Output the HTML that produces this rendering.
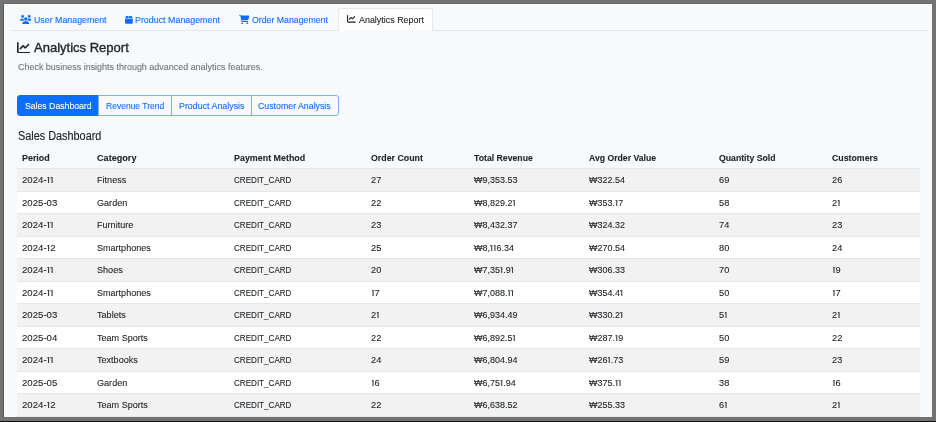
<!DOCTYPE html>
<html><head><meta charset="utf-8">
<style>
html,body{margin:0;padding:0;}
body{width:936px;height:422px;background:#727272;position:relative;overflow:hidden;font-family:"Liberation Sans",sans-serif;color:#212529;}
.blk{position:absolute;left:0;top:421px;width:936px;height:1px;background:#111;}
.frame{position:absolute;left:4px;top:4px;width:928px;height:413px;background:#f8f9fa;overflow:hidden;will-change:transform;}
.inner{position:absolute;left:-4px;top:-4px;width:936px;height:422px;}
.t{position:absolute;white-space:nowrap;line-height:1;-webkit-text-stroke:0.1px currentColor;}
.ic{position:absolute;}
.one{margin-left:0.7px;letter-spacing:0.14px;position:relative;}
.one::before{content:'';position:absolute;left:-0.2px;top:3.0px;width:1.2px;height:0.9px;background:currentColor;transform:skewY(-35deg);}
.box{position:absolute;box-sizing:border-box;}
</style></head><body>
<div class="box" style="left:3px;top:3px;width:1px;height:414px;background:#555"></div>
<div class="box" style="left:3px;top:3px;width:929px;height:1px;background:#686868"></div>
<div class="frame"><div class="inner">

<div class="box" style="left:11px;top:30px;width:916px;height:1px;background:#e3e6e9"></div>
<div class="box" style="left:338px;top:8.4px;width:95px;height:22.6px;background:#fff;border:1px solid #e6e9ec;border-bottom:none;border-radius:3px 3px 0 0"></div>
<div class="t" style="left:33.50px;top:14.96px;font-size:9.5px;transform:scaleX(0.9282);transform-origin:0 0;color:#0d6efd;">User Management</div>
<div class="t" style="left:135.30px;top:14.96px;font-size:9.5px;transform:scaleX(0.9341);transform-origin:0 0;color:#0d6efd;">Product Management</div>
<div class="t" style="left:251.70px;top:14.96px;font-size:9.5px;transform:scaleX(0.9217);transform-origin:0 0;color:#0d6efd;">Order Management</div>
<div class="t" style="left:358.50px;top:14.96px;font-size:9.5px;transform:scaleX(0.9391);transform-origin:0 0;color:#212529;">Analytics Report</div>
<svg class="ic" style="left:19.7px;top:14.8px" width="11.5" height="9.2" viewBox="0 0 640 512"><path fill="#0d6efd" d="M144 0a80 80 0 1 1 0 160A80 80 0 1 1 144 0zM512 0a80 80 0 1 1 0 160A80 80 0 1 1 512 0zM0 298.7C0 239.8 47.8 192 106.7 192h42.7c15.9 0 31 3.5 44.6 9.7c-1.3 7.2-1.9 14.7-1.9 22.3c0 38.2 16.8 72.5 43.3 96c-.2 0-.4 0-.7 0H21.3C9.6 320 0 310.4 0 298.7zM405.3 320c-.2 0-.4 0-.7 0c26.6-23.5 43.3-57.8 43.3-96c0-7.6-.7-15-1.9-22.3c13.6-6.3 28.7-9.7 44.6-9.7h42.7C592.2 192 640 239.8 640 298.7c0 11.8-9.6 21.3-21.3 21.3H405.3zM224 224a96 96 0 1 1 192 0 96 96 0 1 1 -192 0zM128 485.3C128 411.7 187.7 352 261.3 352H378.7C452.3 352 512 411.7 512 485.3c0 14.7-11.9 26.7-26.7 26.7H154.7c-14.7 0-26.7-11.9-26.7-26.7z"/></svg>
<svg class="ic" style="left:124.8px;top:15.8px" width="7.8" height="7.8" viewBox="0 32 448 448"><path fill="#0d6efd" d="M50.7 58.5L0 160H208V32H93.7C75.5 32 58.9 42.3 50.7 58.5zM240 160H448L397.3 58.5C389.1 42.3 372.5 32 354.3 32H240V160zm208 32H0V416c0 35.3 28.7 64 64 64H384c35.3 0 64-28.7 64-64V192z"/></svg>
<svg class="ic" style="left:238.8px;top:14.8px" width="10.35" height="9.2" viewBox="0 0 576 512"><path fill="#0d6efd" d="M0 24C0 10.7 10.7 0 24 0H69.5c22 0 41.5 12.8 50.6 32h411c26.3 0 45.5 25 38.6 50.4l-41 152.3c-8.5 31.4-37 53.3-69.5 53.3H170.7l5.4 28.5c2.2 11.3 12.1 19.5 23.6 19.5H488c13.300 0 24 10.700 24 24s-10.700 24-24 24H199.700c-34.600 0-64.300-24.600-70.700-58.500L77.400 54.500c-.7-3.800-4-6.500-7.900-6.500H24C10.700 48 0 37.300 0 24zM128 464a48 48 0 1 1 96 0 48 48 0 1 1 -96 0zm336-48a48 48 0 1 1 0 96 48 48 0 1 1 0-96z"/></svg>
<svg class="ic" style="left:347px;top:15.4px" width="8.8" height="7.7" viewBox="0 32 512 448"><path fill="#212529" d="M64 64c0-17.7-14.3-32-32-32S0 46.3 0 64V400c0 44.2 35.8 80 80 80H480c17.7 0 32-14.3 32-32s-14.3-32-32-32H80c-8.8 0-16-7.2-16-16V64zm406.6 86.6c12.5-12.5 12.5-32.8 0-45.3s-32.8-12.5-45.3 0L320 210.7l-57.4-57.4c-12.5-12.5-32.8-12.5-45.3 0l-112 112c-12.5 12.5-12.5 32.8 0 45.3s32.8 12.5 45.3 0L240 221.3l57.4 57.4c12.5 12.5 32.8 12.5 45.3 0l128-128z"/></svg>
<svg class="ic" style="left:17px;top:41.6px" width="13.2" height="11.6" viewBox="0 32 512 448"><path fill="#212529" d="M64 64c0-17.7-14.3-32-32-32S0 46.3 0 64V400c0 44.2 35.8 80 80 80H480c17.7 0 32-14.3 32-32s-14.3-32-32-32H80c-8.8 0-16-7.2-16-16V64zm406.6 86.6c12.5-12.5 12.5-32.8 0-45.3s-32.8-12.5-45.3 0L320 210.7l-57.4-57.4c-12.5-12.5-32.8-12.5-45.3 0l-112 112c-12.5 12.5-12.5 32.8 0 45.3s32.8 12.5 45.3 0L240 221.3l57.4 57.4c12.5 12.5 32.8 12.5 45.3 0l128-128z"/></svg>
<div class="t" style="left:33.60px;top:40.60px;font-size:13px;transform:scaleX(1.0016);transform-origin:0 0;-webkit-text-stroke:0.35px #212529;">Analytics Report</div>
<div class="t" style="left:17.50px;top:62.16px;font-size:9.5px;transform:scaleX(0.9421);transform-origin:0 0;color:#6c757d;">Check business insights through advanced analytics features.</div>
<div class="box" style="left:17px;top:94.7px;width:82.4px;height:20.9px;border:1px solid #0d6efd;background:#0d6efd;border-radius:3px 0 0 3px;"></div>
<div class="box" style="left:98.4px;top:94.7px;width:73.9px;height:20.9px;border:1px solid #7fb0fc;background:transparent;"></div>
<div class="box" style="left:171.3px;top:94.7px;width:80.9px;height:20.9px;border:1px solid #7fb0fc;background:transparent;"></div>
<div class="box" style="left:251.2px;top:94.7px;width:88.3px;height:20.9px;border:1px solid #7fb0fc;background:transparent;border-radius:0 3px 3px 0;"></div>
<div class="t" style="left:24.50px;top:101.36px;font-size:9.5px;transform:scaleX(0.9137);transform-origin:0 0;color:#fff;">Sales Dashboard</div>
<div class="t" style="left:105.70px;top:101.36px;font-size:9.5px;transform:scaleX(0.8969);transform-origin:0 0;color:#0d6efd;">Revenue Trend</div>
<div class="t" style="left:178.50px;top:101.36px;font-size:9.5px;transform:scaleX(0.9329);transform-origin:0 0;color:#0d6efd;">Product Analysis</div>
<div class="t" style="left:258.30px;top:101.36px;font-size:9.5px;transform:scaleX(0.9241);transform-origin:0 0;color:#0d6efd;">Customer Analysis</div>
<div class="t" style="left:17.70px;top:129.94px;font-size:12px;transform:scaleX(0.9055);transform-origin:0 0;-webkit-text-stroke:0.15px #212529;">Sales Dashboard</div>
<div class="t" style="left:21.90px;top:152.96px;font-size:9.5px;transform:scaleX(0.9379);transform-origin:0 0;font-weight:bold;">Period</div>
<div class="t" style="left:96.90px;top:152.96px;font-size:9.5px;transform:scaleX(0.9585);transform-origin:0 0;font-weight:bold;">Category</div>
<div class="t" style="left:234.40px;top:152.96px;font-size:9.5px;transform:scaleX(0.9368);transform-origin:0 0;font-weight:bold;">Payment Method</div>
<div class="t" style="left:370.80px;top:152.96px;font-size:9.5px;transform:scaleX(0.9286);transform-origin:0 0;font-weight:bold;">Order Count</div>
<div class="t" style="left:474.30px;top:152.96px;font-size:9.5px;transform:scaleX(0.9156);transform-origin:0 0;font-weight:bold;">Total Revenue</div>
<div class="t" style="left:589.20px;top:152.96px;font-size:9.5px;transform:scaleX(0.9122);transform-origin:0 0;font-weight:bold;">Avg Order Value</div>
<div class="t" style="left:719.40px;top:152.96px;font-size:9.5px;transform:scaleX(0.9145);transform-origin:0 0;font-weight:bold;">Quantity Sold</div>
<div class="t" style="left:831.60px;top:152.96px;font-size:9.5px;transform:scaleX(0.9240);transform-origin:0 0;font-weight:bold;">Customers</div>
<div class="box" style="left:17px;top:168.0px;width:903px;height:23.5px;border-top:1px solid #e5e8eb;background:#f2f2f2"></div>
<div class="box" style="left:17px;top:190.5px;width:903px;height:23.5px;border-top:1px solid #e5e8eb;background:#fff"></div>
<div class="box" style="left:17px;top:213.0px;width:903px;height:23.5px;border-top:1px solid #e5e8eb;background:#f2f2f2"></div>
<div class="box" style="left:17px;top:235.5px;width:903px;height:23.5px;border-top:1px solid #e5e8eb;background:#fff"></div>
<div class="box" style="left:17px;top:258.0px;width:903px;height:23.5px;border-top:1px solid #e5e8eb;background:#f2f2f2"></div>
<div class="box" style="left:17px;top:280.5px;width:903px;height:23.5px;border-top:1px solid #e5e8eb;background:#fff"></div>
<div class="box" style="left:17px;top:303.0px;width:903px;height:23.5px;border-top:1px solid #e5e8eb;background:#f2f2f2"></div>
<div class="box" style="left:17px;top:325.5px;width:903px;height:23.5px;border-top:1px solid #e5e8eb;background:#fff"></div>
<div class="box" style="left:17px;top:348.0px;width:903px;height:23.5px;border-top:1px solid #e5e8eb;background:#f2f2f2"></div>
<div class="box" style="left:17px;top:370.5px;width:903px;height:23.5px;border-top:1px solid #e5e8eb;background:#fff"></div>
<div class="box" style="left:17px;top:393.0px;width:903px;height:23.5px;border-top:1px solid #e5e8eb;background:#f2f2f2"></div>
<div class="box" style="left:17px;top:415.5px;width:903px;height:23.5px;border-top:1px solid #e5e8eb;background:#fff"></div>
<div class="t" style="left:21.90px;top:175.36px;font-size:9.5px;transform:scaleX(1.0142);transform-origin:0 0;">2024-<span class="one">I</span><span class="one">I</span></div>
<div class="t" style="left:96.90px;top:175.36px;font-size:9.5px;transform:scaleX(0.9559);transform-origin:0 0;">Fitness</div>
<div class="t" style="left:234.40px;top:175.36px;font-size:9.5px;transform:scaleX(0.8500);transform-origin:0 0;">CREDIT_CARD</div>
<div class="t" style="left:370.80px;top:175.36px;font-size:9.5px;transform:scaleX(0.9730);transform-origin:0 0;">27</div>
<div class="t" style="left:474.30px;top:175.36px;font-size:9.5px;transform:scaleX(0.9444);transform-origin:0 0;">₩9,353.53</div>
<div class="t" style="left:589.20px;top:175.36px;font-size:9.5px;transform:scaleX(0.9437);transform-origin:0 0;">₩322.54</div>
<div class="t" style="left:719.40px;top:175.36px;font-size:9.5px;transform:scaleX(0.9730);transform-origin:0 0;">69</div>
<div class="t" style="left:831.60px;top:175.36px;font-size:9.5px;transform:scaleX(0.9730);transform-origin:0 0;">26</div>
<div class="t" style="left:21.90px;top:197.86px;font-size:9.5px;transform:scaleX(1.0128);transform-origin:0 0;">2025-03</div>
<div class="t" style="left:96.90px;top:197.86px;font-size:9.5px;transform:scaleX(0.9557);transform-origin:0 0;">Garden</div>
<div class="t" style="left:234.40px;top:197.86px;font-size:9.5px;transform:scaleX(0.8500);transform-origin:0 0;">CREDIT_CARD</div>
<div class="t" style="left:370.80px;top:197.86px;font-size:9.5px;transform:scaleX(0.9730);transform-origin:0 0;">22</div>
<div class="t" style="left:474.30px;top:197.86px;font-size:9.5px;transform:scaleX(0.9444);transform-origin:0 0;">₩8,829.2<span class="one">I</span></div>
<div class="t" style="left:589.20px;top:197.86px;font-size:9.5px;transform:scaleX(0.9437);transform-origin:0 0;">₩353.<span class="one">I</span>7</div>
<div class="t" style="left:719.40px;top:197.86px;font-size:9.5px;transform:scaleX(0.9730);transform-origin:0 0;">58</div>
<div class="t" style="left:831.60px;top:197.86px;font-size:9.5px;transform:scaleX(0.9730);transform-origin:0 0;">2<span class="one">I</span></div>
<div class="t" style="left:21.90px;top:220.36px;font-size:9.5px;transform:scaleX(1.0142);transform-origin:0 0;">2024-<span class="one">I</span><span class="one">I</span></div>
<div class="t" style="left:96.90px;top:220.36px;font-size:9.5px;transform:scaleX(0.9543);transform-origin:0 0;">Furniture</div>
<div class="t" style="left:234.40px;top:220.36px;font-size:9.5px;transform:scaleX(0.8500);transform-origin:0 0;">CREDIT_CARD</div>
<div class="t" style="left:370.80px;top:220.36px;font-size:9.5px;transform:scaleX(0.9730);transform-origin:0 0;">23</div>
<div class="t" style="left:474.30px;top:220.36px;font-size:9.5px;transform:scaleX(0.9444);transform-origin:0 0;">₩8,432.37</div>
<div class="t" style="left:589.20px;top:220.36px;font-size:9.5px;transform:scaleX(0.9437);transform-origin:0 0;">₩324.32</div>
<div class="t" style="left:719.40px;top:220.36px;font-size:9.5px;transform:scaleX(0.9730);transform-origin:0 0;">74</div>
<div class="t" style="left:831.60px;top:220.36px;font-size:9.5px;transform:scaleX(0.9730);transform-origin:0 0;">23</div>
<div class="t" style="left:21.90px;top:242.86px;font-size:9.5px;transform:scaleX(1.0128);transform-origin:0 0;">2024-<span class="one">I</span>2</div>
<div class="t" style="left:96.90px;top:242.86px;font-size:9.5px;transform:scaleX(0.9520);transform-origin:0 0;">Smartphones</div>
<div class="t" style="left:234.40px;top:242.86px;font-size:9.5px;transform:scaleX(0.8500);transform-origin:0 0;">CREDIT_CARD</div>
<div class="t" style="left:370.80px;top:242.86px;font-size:9.5px;transform:scaleX(0.9730);transform-origin:0 0;">25</div>
<div class="t" style="left:474.30px;top:242.86px;font-size:9.5px;transform:scaleX(0.9443);transform-origin:0 0;">₩8,<span class="one">I</span><span class="one">I</span>6.34</div>
<div class="t" style="left:589.20px;top:242.86px;font-size:9.5px;transform:scaleX(0.9437);transform-origin:0 0;">₩270.54</div>
<div class="t" style="left:719.40px;top:242.86px;font-size:9.5px;transform:scaleX(0.9730);transform-origin:0 0;">80</div>
<div class="t" style="left:831.60px;top:242.86px;font-size:9.5px;transform:scaleX(0.9730);transform-origin:0 0;">24</div>
<div class="t" style="left:21.90px;top:265.36px;font-size:9.5px;transform:scaleX(1.0142);transform-origin:0 0;">2024-<span class="one">I</span><span class="one">I</span></div>
<div class="t" style="left:96.90px;top:265.36px;font-size:9.5px;transform:scaleX(0.9570);transform-origin:0 0;">Shoes</div>
<div class="t" style="left:234.40px;top:265.36px;font-size:9.5px;transform:scaleX(0.8500);transform-origin:0 0;">CREDIT_CARD</div>
<div class="t" style="left:370.80px;top:265.36px;font-size:9.5px;transform:scaleX(0.9730);transform-origin:0 0;">20</div>
<div class="t" style="left:474.30px;top:265.36px;font-size:9.5px;transform:scaleX(0.9444);transform-origin:0 0;">₩7,35<span class="one">I</span>.9<span class="one">I</span></div>
<div class="t" style="left:589.20px;top:265.36px;font-size:9.5px;transform:scaleX(0.9437);transform-origin:0 0;">₩306.33</div>
<div class="t" style="left:719.40px;top:265.36px;font-size:9.5px;transform:scaleX(0.9730);transform-origin:0 0;">70</div>
<div class="t" style="left:831.60px;top:265.36px;font-size:9.5px;transform:scaleX(0.9730);transform-origin:0 0;"><span class="one">I</span>9</div>
<div class="t" style="left:21.90px;top:287.86px;font-size:9.5px;transform:scaleX(1.0142);transform-origin:0 0;">2024-<span class="one">I</span><span class="one">I</span></div>
<div class="t" style="left:96.90px;top:287.86px;font-size:9.5px;transform:scaleX(0.9520);transform-origin:0 0;">Smartphones</div>
<div class="t" style="left:234.40px;top:287.86px;font-size:9.5px;transform:scaleX(0.8500);transform-origin:0 0;">CREDIT_CARD</div>
<div class="t" style="left:370.80px;top:287.86px;font-size:9.5px;transform:scaleX(0.9730);transform-origin:0 0;"><span class="one">I</span>7</div>
<div class="t" style="left:474.30px;top:287.86px;font-size:9.5px;transform:scaleX(0.9443);transform-origin:0 0;">₩7,088.<span class="one">I</span><span class="one">I</span></div>
<div class="t" style="left:589.20px;top:287.86px;font-size:9.5px;transform:scaleX(0.9437);transform-origin:0 0;">₩354.4<span class="one">I</span></div>
<div class="t" style="left:719.40px;top:287.86px;font-size:9.5px;transform:scaleX(0.9730);transform-origin:0 0;">50</div>
<div class="t" style="left:831.60px;top:287.86px;font-size:9.5px;transform:scaleX(0.9730);transform-origin:0 0;"><span class="one">I</span>7</div>
<div class="t" style="left:21.90px;top:310.36px;font-size:9.5px;transform:scaleX(1.0128);transform-origin:0 0;">2025-03</div>
<div class="t" style="left:96.90px;top:310.36px;font-size:9.5px;transform:scaleX(0.9560);transform-origin:0 0;">Tablets</div>
<div class="t" style="left:234.40px;top:310.36px;font-size:9.5px;transform:scaleX(0.8500);transform-origin:0 0;">CREDIT_CARD</div>
<div class="t" style="left:370.80px;top:310.36px;font-size:9.5px;transform:scaleX(0.9730);transform-origin:0 0;">2<span class="one">I</span></div>
<div class="t" style="left:474.30px;top:310.36px;font-size:9.5px;transform:scaleX(0.9444);transform-origin:0 0;">₩6,934.49</div>
<div class="t" style="left:589.20px;top:310.36px;font-size:9.5px;transform:scaleX(0.9437);transform-origin:0 0;">₩330.2<span class="one">I</span></div>
<div class="t" style="left:719.40px;top:310.36px;font-size:9.5px;transform:scaleX(0.9730);transform-origin:0 0;">5<span class="one">I</span></div>
<div class="t" style="left:831.60px;top:310.36px;font-size:9.5px;transform:scaleX(0.9730);transform-origin:0 0;">2<span class="one">I</span></div>
<div class="t" style="left:21.90px;top:332.86px;font-size:9.5px;transform:scaleX(1.0128);transform-origin:0 0;">2025-04</div>
<div class="t" style="left:96.90px;top:332.86px;font-size:9.5px;transform:scaleX(0.9523);transform-origin:0 0;">Team Sports</div>
<div class="t" style="left:234.40px;top:332.86px;font-size:9.5px;transform:scaleX(0.8500);transform-origin:0 0;">CREDIT_CARD</div>
<div class="t" style="left:370.80px;top:332.86px;font-size:9.5px;transform:scaleX(0.9730);transform-origin:0 0;">22</div>
<div class="t" style="left:474.30px;top:332.86px;font-size:9.5px;transform:scaleX(0.9444);transform-origin:0 0;">₩6,892.5<span class="one">I</span></div>
<div class="t" style="left:589.20px;top:332.86px;font-size:9.5px;transform:scaleX(0.9437);transform-origin:0 0;">₩287.<span class="one">I</span>9</div>
<div class="t" style="left:719.40px;top:332.86px;font-size:9.5px;transform:scaleX(0.9730);transform-origin:0 0;">50</div>
<div class="t" style="left:831.60px;top:332.86px;font-size:9.5px;transform:scaleX(0.9730);transform-origin:0 0;">22</div>
<div class="t" style="left:21.90px;top:355.36px;font-size:9.5px;transform:scaleX(1.0142);transform-origin:0 0;">2024-<span class="one">I</span><span class="one">I</span></div>
<div class="t" style="left:96.90px;top:355.36px;font-size:9.5px;transform:scaleX(0.9535);transform-origin:0 0;">Textbooks</div>
<div class="t" style="left:234.40px;top:355.36px;font-size:9.5px;transform:scaleX(0.8500);transform-origin:0 0;">CREDIT_CARD</div>
<div class="t" style="left:370.80px;top:355.36px;font-size:9.5px;transform:scaleX(0.9730);transform-origin:0 0;">24</div>
<div class="t" style="left:474.30px;top:355.36px;font-size:9.5px;transform:scaleX(0.9444);transform-origin:0 0;">₩6,804.94</div>
<div class="t" style="left:589.20px;top:355.36px;font-size:9.5px;transform:scaleX(0.9437);transform-origin:0 0;">₩26<span class="one">I</span>.73</div>
<div class="t" style="left:719.40px;top:355.36px;font-size:9.5px;transform:scaleX(0.9730);transform-origin:0 0;">59</div>
<div class="t" style="left:831.60px;top:355.36px;font-size:9.5px;transform:scaleX(0.9730);transform-origin:0 0;">23</div>
<div class="t" style="left:21.90px;top:377.86px;font-size:9.5px;transform:scaleX(1.0128);transform-origin:0 0;">2025-05</div>
<div class="t" style="left:96.90px;top:377.86px;font-size:9.5px;transform:scaleX(0.9557);transform-origin:0 0;">Garden</div>
<div class="t" style="left:234.40px;top:377.86px;font-size:9.5px;transform:scaleX(0.8500);transform-origin:0 0;">CREDIT_CARD</div>
<div class="t" style="left:370.80px;top:377.86px;font-size:9.5px;transform:scaleX(0.9730);transform-origin:0 0;"><span class="one">I</span>6</div>
<div class="t" style="left:474.30px;top:377.86px;font-size:9.5px;transform:scaleX(0.9444);transform-origin:0 0;">₩6,75<span class="one">I</span>.94</div>
<div class="t" style="left:589.20px;top:377.86px;font-size:9.5px;transform:scaleX(0.9437);transform-origin:0 0;">₩375.<span class="one">I</span><span class="one">I</span></div>
<div class="t" style="left:719.40px;top:377.86px;font-size:9.5px;transform:scaleX(0.9730);transform-origin:0 0;">38</div>
<div class="t" style="left:831.60px;top:377.86px;font-size:9.5px;transform:scaleX(0.9730);transform-origin:0 0;"><span class="one">I</span>6</div>
<div class="t" style="left:21.90px;top:400.36px;font-size:9.5px;transform:scaleX(1.0128);transform-origin:0 0;">2024-<span class="one">I</span>2</div>
<div class="t" style="left:96.90px;top:400.36px;font-size:9.5px;transform:scaleX(0.9523);transform-origin:0 0;">Team Sports</div>
<div class="t" style="left:234.40px;top:400.36px;font-size:9.5px;transform:scaleX(0.8500);transform-origin:0 0;">CREDIT_CARD</div>
<div class="t" style="left:370.80px;top:400.36px;font-size:9.5px;transform:scaleX(0.9730);transform-origin:0 0;">22</div>
<div class="t" style="left:474.30px;top:400.36px;font-size:9.5px;transform:scaleX(0.9444);transform-origin:0 0;">₩6,638.52</div>
<div class="t" style="left:589.20px;top:400.36px;font-size:9.5px;transform:scaleX(0.9437);transform-origin:0 0;">₩255.33</div>
<div class="t" style="left:719.40px;top:400.36px;font-size:9.5px;transform:scaleX(0.9730);transform-origin:0 0;">6<span class="one">I</span></div>
<div class="t" style="left:831.60px;top:400.36px;font-size:9.5px;transform:scaleX(0.9730);transform-origin:0 0;">2<span class="one">I</span></div>
<div class="t" style="left:21.90px;top:422.86px;font-size:9.5px;transform:scaleX(1.0128);transform-origin:0 0;">2025-0<span class="one">I</span></div>
<div class="t" style="left:96.90px;top:422.86px;font-size:9.5px;transform:scaleX(0.9559);transform-origin:0 0;">Fitness</div>
<div class="t" style="left:234.40px;top:422.86px;font-size:9.5px;transform:scaleX(0.8500);transform-origin:0 0;">CREDIT_CARD</div>
<div class="t" style="left:370.80px;top:422.86px;font-size:9.5px;transform:scaleX(0.9730);transform-origin:0 0;"><span class="one">I</span>9</div>
<div class="t" style="left:474.30px;top:422.86px;font-size:9.5px;transform:scaleX(0.9444);transform-origin:0 0;">₩6,500.00</div>
<div class="t" style="left:589.20px;top:422.86px;font-size:9.5px;transform:scaleX(0.9437);transform-origin:0 0;">₩342.<span class="one">I</span><span class="one">I</span></div>
<div class="t" style="left:719.40px;top:422.86px;font-size:9.5px;transform:scaleX(0.9730);transform-origin:0 0;">45</div>
<div class="t" style="left:831.60px;top:422.86px;font-size:9.5px;transform:scaleX(0.9730);transform-origin:0 0;"><span class="one">I</span>9</div>
</div></div>
<div class="blk"></div>
</body></html>
